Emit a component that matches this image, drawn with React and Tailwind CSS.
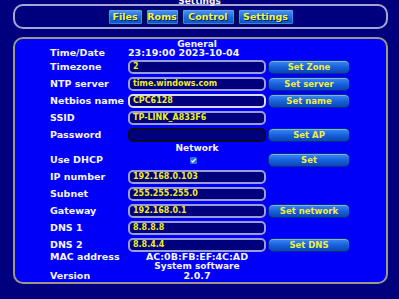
import React from "react";

function Btn({ children }) {
  return (
    <div className="ml-[2px] w-[82px] h-full rounded-[5px] border border-[#0a2a8a] bg-gradient-to-b from-[#3c8af6] via-[#1862dc] to-[#0a46b6] shadow-[inset_0_1px_0_rgba(255,255,255,0.35)] flex items-center justify-center text-[8.5px] font-bold leading-none text-[#f0ee3c]">
      {children}
    </div>
  );
}

function Field({ value, cls }) {
  return (
    <div className={"w-[138px] h-full rounded-[5px] bg-[#00007c] flex items-center pl-[3px] text-[8px] font-bold leading-none text-[#eeee22] " + cls}>
      {value}
    </div>
  );
}

function Row({ label, children, button, h = "h-[14px]", mt = "mt-[3px]" }) {
  return (
    <div className={"flex items-center " + h + " " + mt}>
      <div className="w-[78px] text-[9.5px] font-bold leading-none text-[#f4f4f4] whitespace-nowrap">{label}</div>
      <div className="w-[138px] h-full flex items-center">{children}</div>
      <div className="h-full">{button ? <Btn>{button}</Btn> : null}</div>
    </div>
  );
}

function Header({ children, h = "h-[9px]", mt = "mt-0" }) {
  return (
    <div className={"flex items-center " + h + " " + mt}>
      <div className="w-[78px]" />
      <div className="w-[138px] text-center text-[9px] font-bold leading-none text-[#f4f4f4] whitespace-nowrap">{children}</div>
    </div>
  );
}

const NAV = [
  ["Files", "w-[35px]"],
  ["Roms", "w-[33px]"],
  ["Control", "w-[53px]"],
  ["Settings", "w-[56px]"],
];

export default function App() {
  const lav = "border-2 border-[#9c9cd8]";
  return (
    <div className="w-[399px] h-[299px] overflow-hidden bg-[#00007e] font-[family-name:'DejaVu_Sans',Verdana,sans-serif]">
      <div className="-mt-[3px] h-[7px] leading-[9px] text-center text-[9px] font-bold text-[#f4f4f4]">Settings</div>
      <div className="ml-[13px] w-[375px] h-[25px] rounded-[10px] border-2 border-[#a6a6d4] flex items-center justify-center gap-[3px]">
        {NAV.map(([t, w]) => (
          <div
            key={t}
            className={"h-[16px] mt-[1px] rounded-[2px] border border-[#00104a] bg-gradient-to-b from-[#4a96fa] via-[#1c6ae2] to-[#0c50c0] shadow-[inset_0_0_0_1px_rgba(120,180,255,0.45)] flex items-center justify-center text-[9.5px] font-bold leading-none text-[#f6f43a] [text-shadow:1px_1px_0_#002070] " + w}
          >
            {t}
          </div>
        ))}
      </div>
      <div className="ml-[13px] mt-[8px] w-[375px] h-[247px] rounded-[10px] border-2 border-[#9c9888] bg-[#0000fa] pl-[35px] pt-[1px]">
        <Header h="h-[8px]">General</Header>
        <div className="flex items-center h-[10px]">
          <div className="w-[78px] text-[9.5px] font-bold leading-none text-[#f4f4f4]">Time/Date</div>
          <div className="text-[9.5px] font-bold leading-none text-[#f4f4f4] whitespace-nowrap">23:19:00 2023-10-04</div>
        </div>
        <Row label="Timezone" button="Set Zone" mt="mt-[2px]"><Field value="2" cls={lav} /></Row>
        <Row label="NTP server" button="Set server"><Field value="time.windows.com" cls={lav} /></Row>
        <Row label="Netbios name" button="Set name"><Field value="CPC6128" cls="border-2 border-[#dcdcf0]" /></Row>
        <Row label="SSID"><Field value="TP-LINK_A833F6" cls={lav} /></Row>
        <Row label="Password" button="Set AP"><Field value="" cls="border-2 border-[#0a0a28]" /></Row>
        <Header mt="mt-[2px]">Network</Header>
        <Row label="Use DHCP" button="Set" mt="mt-0">
          <div className="w-full h-full flex items-center pl-[62px]">
            <svg width="7" height="7" viewBox="0 0 7 7">
              <rect x="0" y="0" width="7" height="7" rx="1" fill="#2a6cf0" />
              <path d="M1.4 3.6 L2.8 5 L5.6 1.8" stroke="#ffffff" strokeWidth="1.2" fill="none" />
            </svg>
          </div>
        </Row>
        <Row label="IP number"><Field value="192.168.0.103" cls={lav} /></Row>
        <Row label="Subnet"><Field value="255.255.255.0" cls={lav} /></Row>
        <Row label="Gateway" button="Set network"><Field value="192.168.0.1" cls={lav} /></Row>
        <Row label="DNS 1"><Field value="8.8.8.8" cls={lav} /></Row>
        <Row label="DNS 2" button="Set DNS"><Field value="8.8.4.4" cls={lav} /></Row>
        <div className="flex items-center h-[10px]">
          <div className="w-[78px] text-[9.5px] font-bold leading-none text-[#f4f4f4]">MAC address</div>
          <div className="w-[138px] text-center text-[9.5px] font-bold leading-none text-[#f4f4f4] whitespace-nowrap">AC:0B:FB:EF:4C:AD</div>
        </div>
        <Header>System software</Header>
        <div className="flex items-center h-[9px]">
          <div className="w-[78px] text-[9.5px] font-bold leading-none text-[#f4f4f4]">Version</div>
          <div className="w-[138px] text-center text-[9.5px] font-bold leading-none text-[#f4f4f4]">2.0.7</div>
        </div>
      </div>
    </div>
  );
}
